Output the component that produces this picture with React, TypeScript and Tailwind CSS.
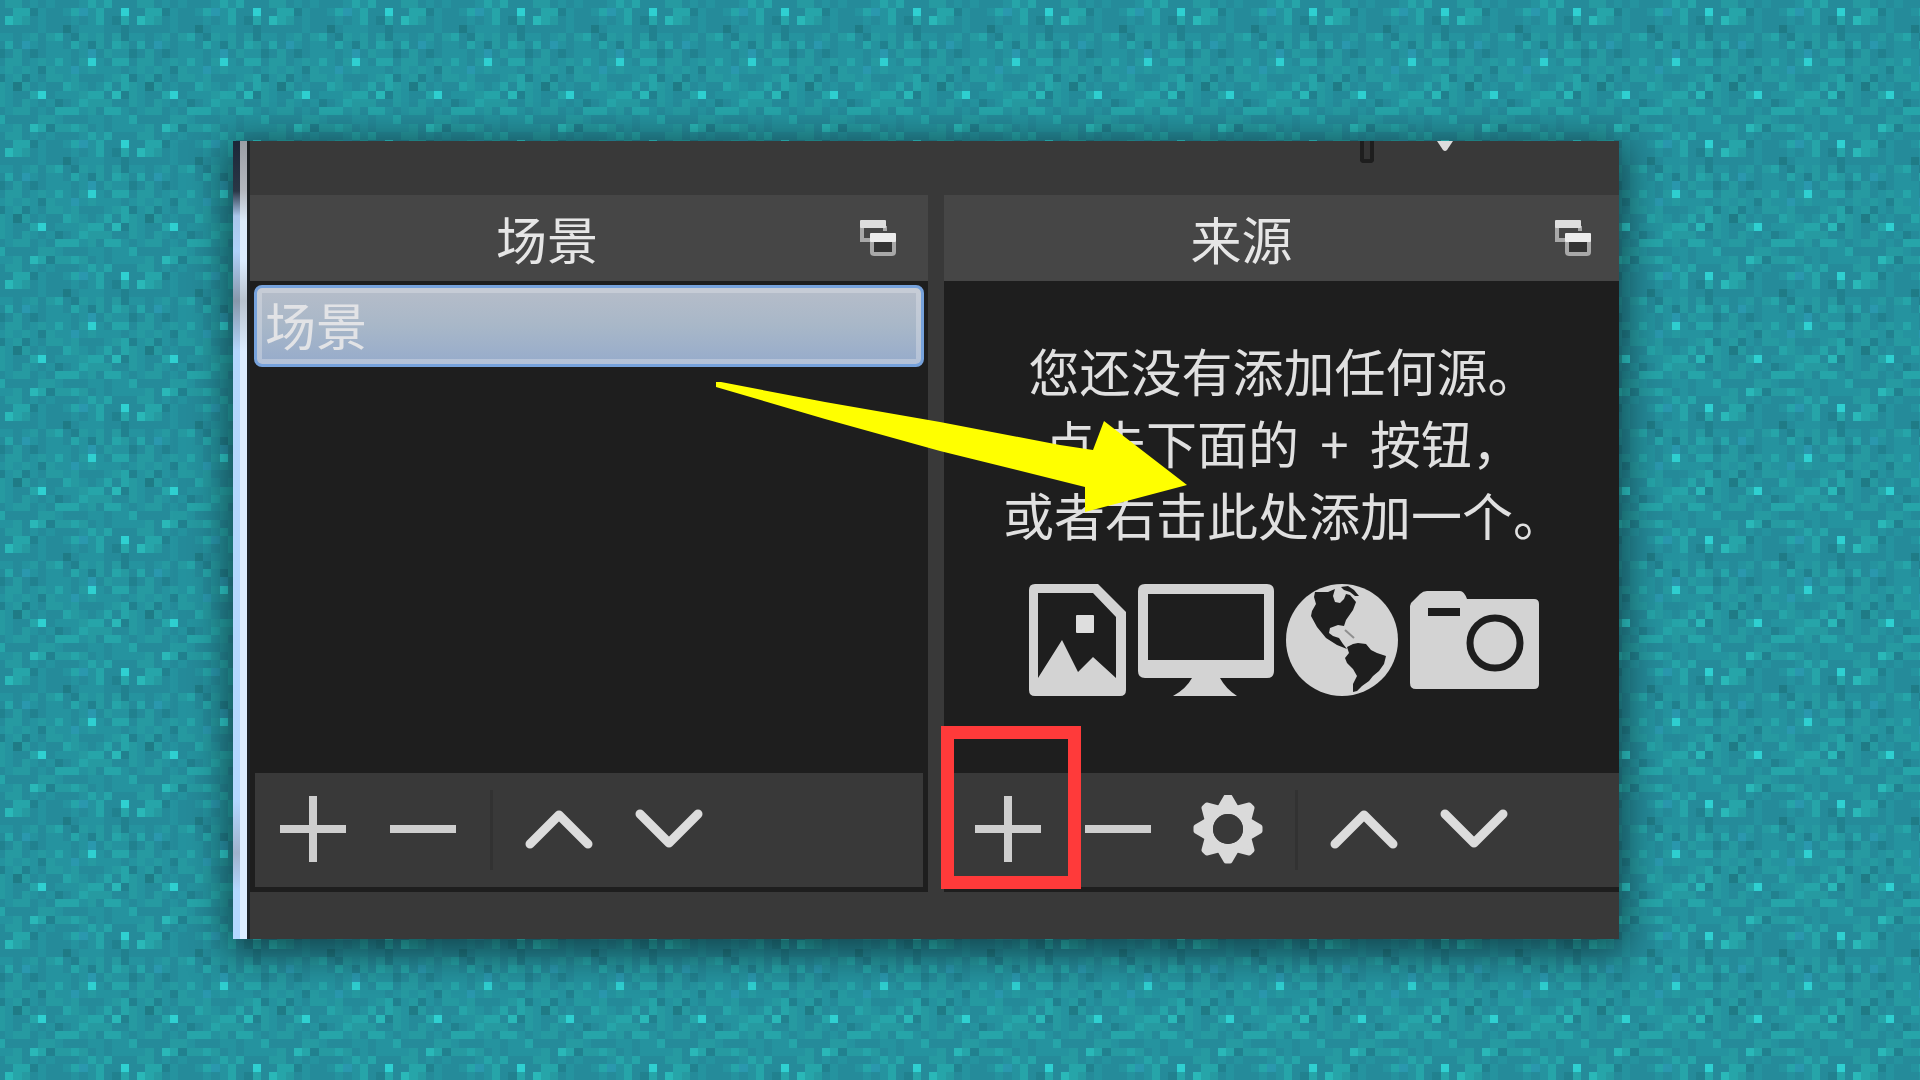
import type { ReactNode } from "react";

const TILE = [
  "255132235b352272",
  "6542322232352152",
  "2222322023332212",
  "3234245214342413",
  "52b3233253142542",
  "2421233323b24331",
  "4423435324732552",
  "43431433b3433323",
  "3413244342223451",
  "3042322543235254",
  "3225723334552614",
  "3243231235444224",
  "3442325553425532",
  "2222443222332335",
  "3426514454232333",
  "4423232223535222",
];

const TONES: Record<string, string> = {
  "0": "#1f7b86",
  "1": "#21818f",
  "2": "#258b9a",
  "3": "#25939f",
  "4": "#269aa1",
  "5": "#26a5a9",
  "6": "#2ab8b8",
  "7": "#2fd0d1",
  b: "#2a98ae",
};

const edge = (i: number) => Math.round((i * 132) / 16);

function PixelBackdrop() {
  return (
    <svg className="absolute inset-0 h-full w-full" aria-hidden="true" shapeRendering="crispEdges">
      <defs>
        <pattern id="pixels" x="5" y="8" width="132" height="132" patternUnits="userSpaceOnUse">
          {TILE.flatMap((row, r) =>
            row.split("").map((tone, c) => (
              <rect
                key={`${r}-${c}`}
                x={edge(c)}
                y={edge(r)}
                width={edge(c + 1) - edge(c)}
                height={edge(r + 1) - edge(r)}
                fill={TONES[tone]}
              />
            )),
          )}
        </pattern>
      </defs>
      <rect width="100%" height="100%" fill="url(#pixels)" />
    </svg>
  );
}

function PopOutIcon() {
  return (
    <svg width="36" height="38" viewBox="0 0 36 38" aria-hidden="true">
      <path d="M2 7V21H10M25 7V12" fill="none" stroke="#a8a8a8" strokeWidth="4" />
      <rect x="0" y="1" width="26" height="8" rx="1" fill="#dedede" />
      <rect x="12" y="16" width="22" height="19" rx="2" fill="#333" stroke="#a8a8a8" strokeWidth="4" />
      <rect x="10" y="14" width="26" height="9" rx="1" fill="#ececec" />
    </svg>
  );
}

function PlusIcon() {
  return (
    <svg width="70" height="70" viewBox="0 0 70 70" aria-hidden="true">
      <path d="M2 34H68M35 1V67" stroke="#cecece" strokeWidth="8" />
    </svg>
  );
}

function MinusIcon() {
  return (
    <svg width="70" height="70" viewBox="0 0 70 70" aria-hidden="true">
      <path d="M2 34H68" stroke="#cecece" strokeWidth="8" />
    </svg>
  );
}

function ChevronIcon({ down = false }: { down?: boolean }) {
  return (
    <svg width="70" height="70" viewBox="0 0 70 70" aria-hidden="true">
      <path
        d={down ? "M6 19L35 48L64 19" : "M6 49L35 20L64 49"}
        fill="none"
        stroke="#dcdcdc"
        strokeWidth="9"
        strokeLinecap="round"
        strokeLinejoin="round"
      />
    </svg>
  );
}

function GearIcon() {
  return (
    <svg width="70" height="70" viewBox="-35 -34 70 70" aria-hidden="true">
      {[0, 45, 90, 135, 180, 225, 270, 315].map((angle) => (
        <path
          key={angle}
          d="M-9 -20L-2 -32H2L9 -20Z"
          transform={`rotate(${angle})`}
          fill="#dadada"
          stroke="#dadada"
          strokeWidth="5"
          strokeLinejoin="round"
        />
      ))}
      <circle r="20" fill="none" stroke="#dadada" strokeWidth="10" />
      <circle r="15" fill="#393939" />
    </svg>
  );
}

function ImageIcon() {
  return (
    <svg width="97" height="112" viewBox="0 0 97 112" aria-hidden="true">
      <path
        fillRule="evenodd"
        fill="#d3d3d3"
        d="M6 0H69L97 28V106Q97 112 91 112H6Q0 112 0 106V6Q0 0 6 0ZM9 9V94L33 56L49 88L64 73L87 94V33L64 9Z"
      />
      <rect x="47" y="31" width="18" height="18" rx="1" fill="#dedede" />
    </svg>
  );
}

function MonitorIcon() {
  return (
    <svg width="136" height="112" viewBox="0 0 136 112" aria-hidden="true">
      <path
        fillRule="evenodd"
        fill="#d3d3d3"
        d="M7 0H129Q136 0 136 7V87Q136 94 129 94H82Q88 105 99 112H35Q48 105 54 94H7Q0 94 0 87V7Q0 0 7 0ZM10 10V76H126V10Z"
      />
    </svg>
  );
}

function GlobeIcon() {
  return (
    <svg width="112" height="112" viewBox="0 0 112 112" aria-hidden="true">
      <circle cx="56" cy="56" r="56" fill="#d3d3d3" />
      <g fill="#1e1e1e">
        <path d="M29 8L35 8L42 8L49 5L47 12L49 18L54 19L58 15L60 10L64 11L70 18L67 26L60 36L58 42L52 41L44 44L43 49L47 52L53 54L57 60L61 65L51 61L40 54L31 43L25 32L26 27L30 20L28 13Z" />
        <path d="M55 3L62 2L68 6L73 12L69 12L64 8L58 6Z" />
        <path d="M61 63L67 60L72 59L80 60L85 66L91 69L100 72L98 80L93 87L87 92L83 97L76 102L71 107L67 108L67 100L71 92L67 85L61 79L59 74L63 69Z" />
      </g>
      <path d="M59 46L68 54" fill="none" stroke="#8f8f8f" strokeWidth="2" />
    </svg>
  );
}

function CameraIcon() {
  return (
    <svg width="129" height="112" viewBox="0 0 129 112" aria-hidden="true">
      <path
        fill="#d3d3d3"
        d="M0 22Q0 19 3 17L10 10Q13 7 17 7H50Q54 7 57 15H124Q129 15 129 20V100Q129 105 124 105H6Q0 105 0 99Z"
      />
      <rect x="18" y="24" width="32" height="8" fill="#1e1e1e" />
      <circle cx="85" cy="59" r="25" fill="none" stroke="#1e1e1e" strokeWidth="7" />
    </svg>
  );
}

function DockHeader({ title, children }: { title: string; children?: ReactNode }) {
  return (
    <header className="flex h-[86px] items-center bg-[#464646] pr-7">
      <h2 className="flex-1 text-center text-[51px] leading-[72px] text-[#e6e6e6]">{title}</h2>
      <button type="button" aria-label={`${title} 浮动`} className="pl-4">
        <PopOutIcon />
      </button>
      {children}
    </header>
  );
}

function ToolButton({ label, children }: { label: string; children: ReactNode }) {
  return (
    <button type="button" aria-label={label} className="flex h-full w-[110px] items-center justify-center">
      {children}
    </button>
  );
}

function Separator() {
  return (
    <div className="flex w-[26px] justify-center">
      <div className="h-20 w-[3px] bg-[#323232]" />
    </div>
  );
}

export default function App() {
  return (
    <div className="relative min-h-screen overflow-hidden bg-[#258f9c] pt-[141px] pr-[301px] pb-[141px] pl-[233px] font-['Noto_Sans_CJK_SC',sans-serif]">
      <PixelBackdrop />
      <main className="relative flex bg-[#393939] shadow-[0_8px_36px_6px_rgba(0,0,0,0.5)]">
        <div className="flex w-[17px] shrink-0 bg-[#1e2226]">
          <div className="w-[7px] bg-[linear-gradient(to_bottom,#1c2738_0,#2a3646_50px,#a9c6ea_75px,#b0d2fa_110px,#8797aa_160px,#b4d6fc_210px,#b4d8ff_660px,#9fb2cc_712px,#b4d8ff_750px)]" />
          <div className="w-[7px] bg-[linear-gradient(to_bottom,#9a9ea6_0,#b4b8c0_50px,#dcebfb_80px,#dcecff_120px,#b9c4d0_160px,#dcecff_210px,#dcecff_100%)]" />
        </div>
        <div className="relative min-w-0 flex-1">
          <div className="relative h-[54px]">
            <div className="absolute top-0 right-[245px] h-[22px] w-[14px] rounded-b-sm border-4 border-t-0 border-[#1e1e1e] bg-[#343434]" />
            <svg className="absolute top-0 right-[166px]" width="16" height="11" viewBox="0 0 16 11" aria-hidden="true">
              <path d="M0 0H16L10 9Q8 11 6 9Z" fill="#dcdcdc" />
            </svg>
          </div>
          <div className="grid grid-cols-[678fr_675fr] gap-4">
            <section>
              <DockHeader title="场景">
                <span className="w-1" />
              </DockHeader>
              <ul className="h-[492px] bg-[#1e1e1e] p-1">
                <li>
                  <button
                    type="button"
                    className="flex h-[82px] w-full items-start rounded-lg border-[3px] border-[#76a2dc] bg-linear-to-b from-[#b6bdc9] via-[#a8b7c8] to-[#96abcb] px-2 text-left text-[51px] leading-[72px] text-[#e2e3e6] shadow-[inset_0_0_0_5px_rgba(225,228,235,0.4)]"
                  >
                    场景
                  </button>
                </li>
              </ul>
              <div className="flex h-[119px] items-center border-x-[5px] border-b-[5px] border-[#1e1e1e] bg-[#393939] pl-[3px]">
                <ToolButton label="添加场景"><PlusIcon /></ToolButton>
                <ToolButton label="移除场景"><MinusIcon /></ToolButton>
                <Separator />
                <ToolButton label="上移场景"><ChevronIcon /></ToolButton>
                <ToolButton label="下移场景"><ChevronIcon down /></ToolButton>
              </div>
            </section>
            <section>
              <DockHeader title="来源" />
              <div className="flex h-[492px] flex-col items-center bg-[#1e1e1e] pt-[53px] pl-1">
                <p className="text-center text-[51px] leading-[72px] whitespace-nowrap text-[#e0e0e0]">
                  您还没有添加任何源。
                  <br />
                  点击下面的 <span className="mx-2.5">+</span> 按钮，
                  <br />
                  或者右击此处添加一个。
                </p>
                <div className="mt-[34px] flex gap-3">
                  <ImageIcon />
                  <MonitorIcon />
                  <GlobeIcon />
                  <CameraIcon />
                </div>
              </div>
              <div className="flex h-[119px] items-center border-b-[5px] border-[#1e1e1e] bg-[#393939] pl-[9px]">
                <div className="relative h-full">
                  <ToolButton label="添加来源"><PlusIcon /></ToolButton>
                  <div className="pointer-events-none absolute -top-[47px] -right-[18px] -bottom-[2px] -left-3 border-[13px] border-[#ff3a3a]" />
                </div>
                <ToolButton label="移除来源"><MinusIcon /></ToolButton>
                <ToolButton label="来源属性"><GearIcon /></ToolButton>
                <Separator />
                <ToolButton label="上移来源"><ChevronIcon /></ToolButton>
                <ToolButton label="下移来源"><ChevronIcon down /></ToolButton>
              </div>
            </section>
          </div>
          <div className="h-[47px]" />
          <svg
            className="pointer-events-none absolute top-60 left-[465px]"
            width="472"
            height="132"
            viewBox="0 0 472 132"
            aria-hidden="true"
          >
            <path d="M1 1L6 1L110 21L225 41L345 64L378 69L389 40L472 104L370 131L370 106L225 70L110 38L1 6Z" fill="#ffff00" />
          </svg>
        </div>
      </main>
    </div>
  );
}
